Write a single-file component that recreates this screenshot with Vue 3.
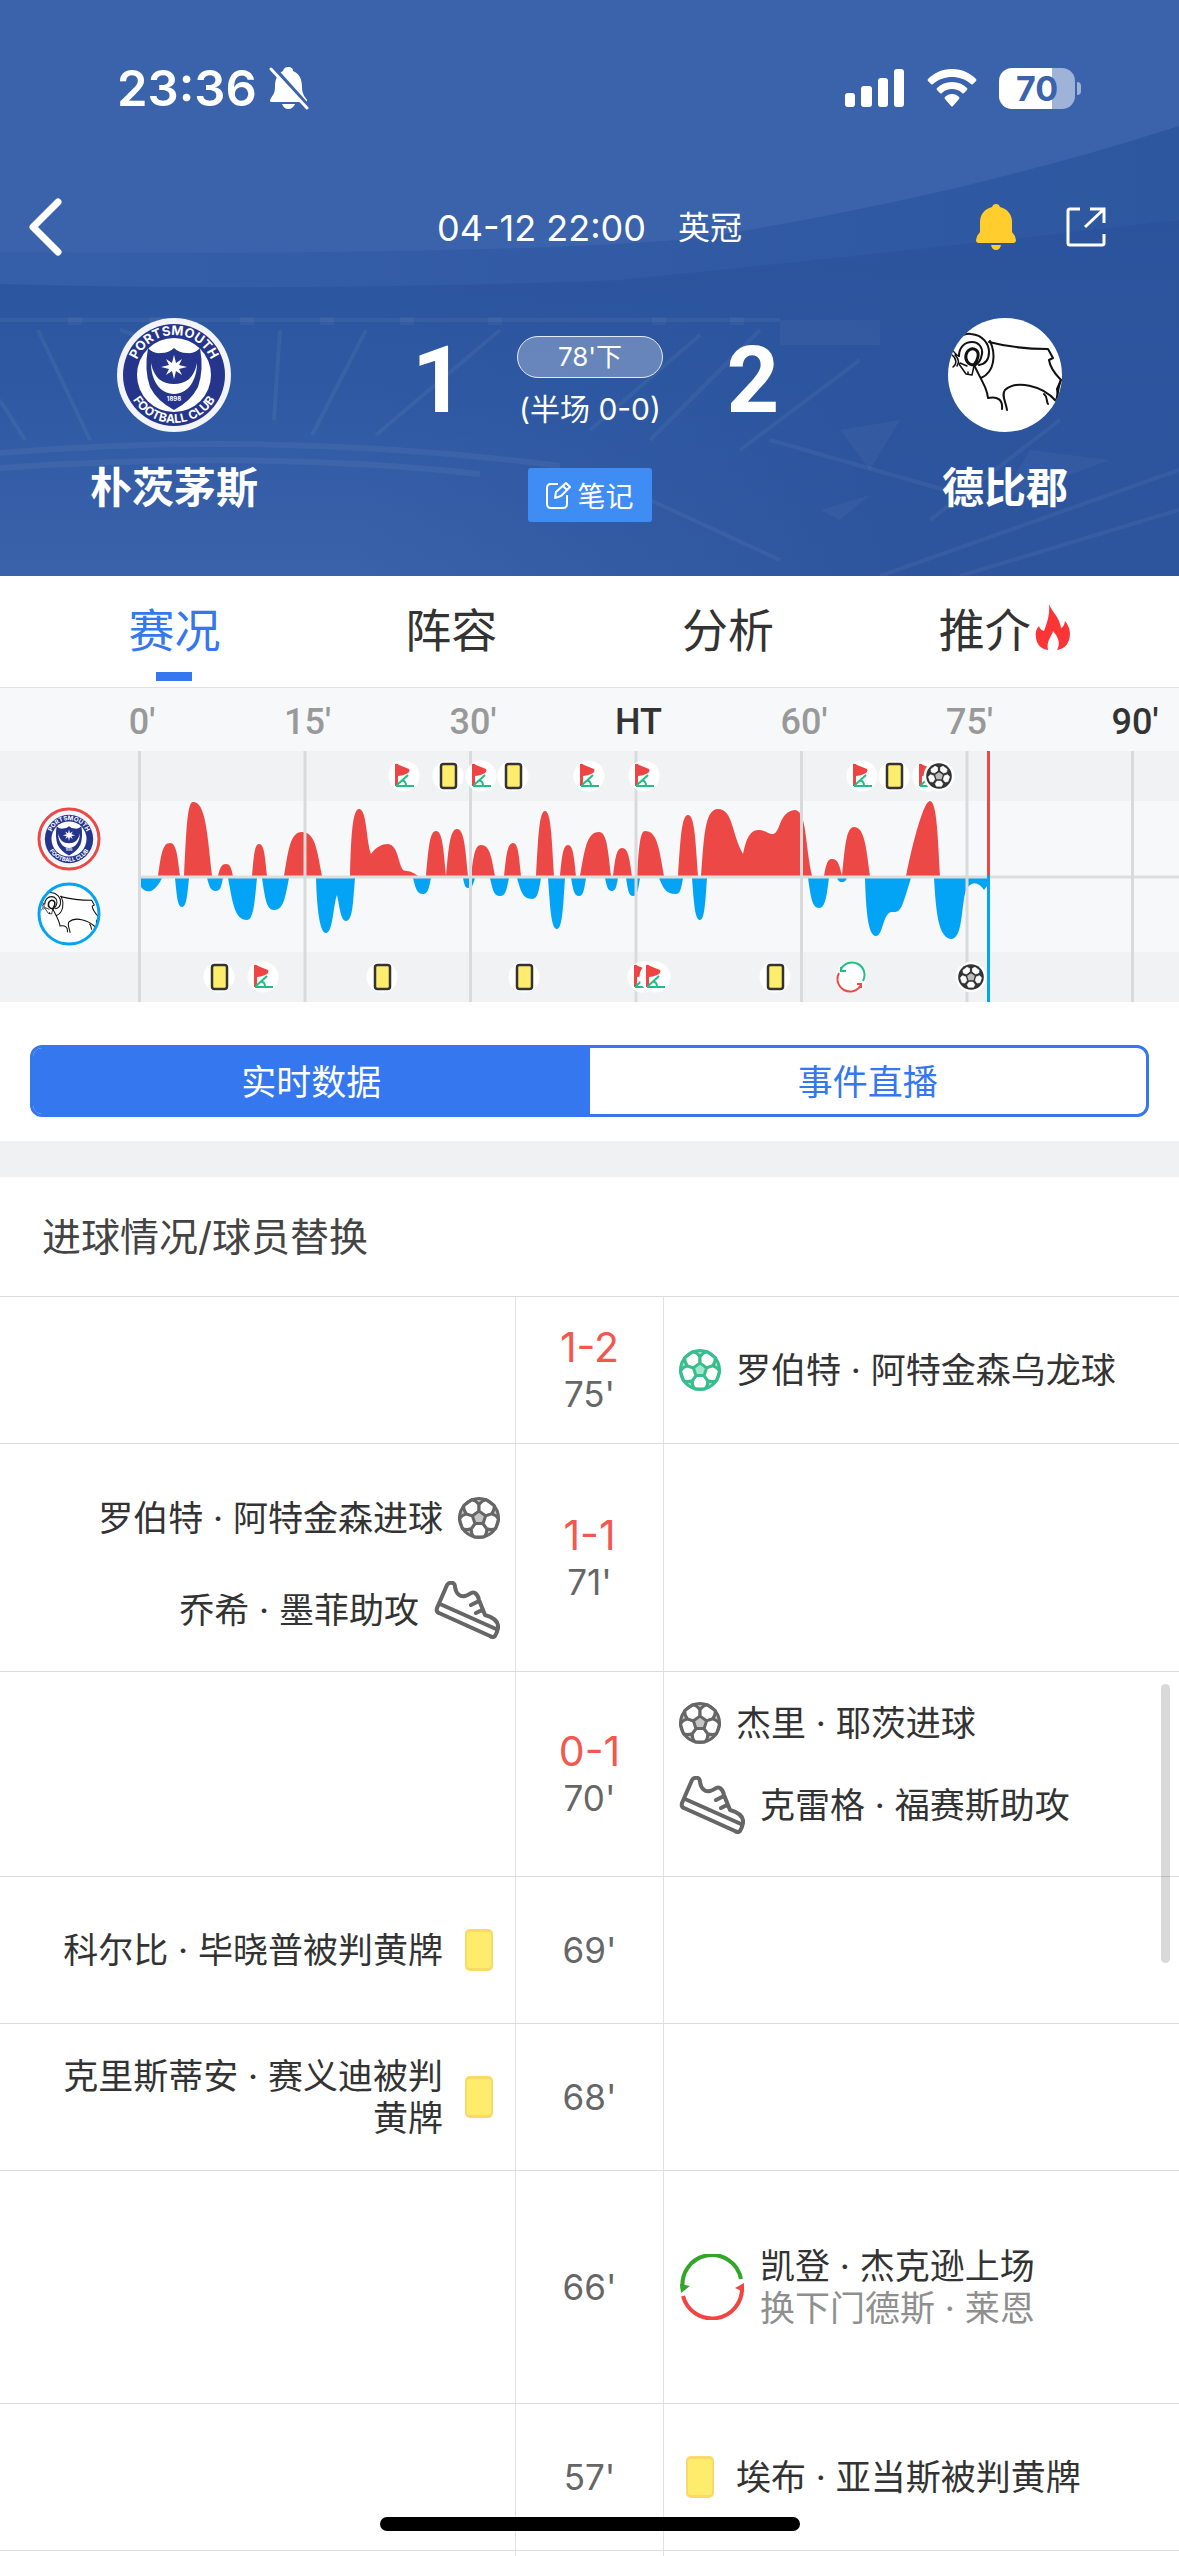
<template>
  <div class="page">
    <!-- 公用图形 -->
    <svg class="defs" aria-hidden="true">
      <defs>
        <path id="arcTop" d="M-40 0A40 40 0 0 1 40 0" />
        <path id="arcBottom" d="M-48 0A48 48 0 0 0 48 0" />
        <clipPath id="ramClip"><circle r="57" /></clipPath>

        <symbol id="logo-home" viewBox="-57 -57 114 114">
          <circle r="57" fill="#f3f4fa" />
          <circle r="51" fill="#24358b" />
          <circle r="37" fill="#fff" />
          <path d="M-26 -27Q-21 -21 -13 -22Q-5 -22 0 -27Q5 -22 13 -22Q21 -21 26 -27Q30 -5 24 12Q17 26 0 35Q-17 26 -24 12Q-30 -5 -26 -27Z" fill="#24358b" />
          <path d="M-23 -12C-23 5 -14 19 0 19C14 19 23 5 23 -12C20 3 12 9 0 9C-12 9 -20 3 -23 -12Z" fill="#fff" />
          <path d="M0 -20L2 -12L8 -16L5 -10L13 -8L5 -6L8 0L2 -4L0 4L-2 -4L-8 0L-5 -6L-13 -8L-5 -10L-8 -16L-2 -12Z" fill="#fff" />
          <text y="26" class="crest-year">1898</text>
          <text class="crest-top"><textPath href="#arcTop" startOffset="50%">PORTSMOUTH</textPath></text>
          <text class="crest-bottom"><textPath href="#arcBottom" startOffset="50%">FOOTBALL CLUB</textPath></text>
        </symbol>

        <symbol id="logo-away" viewBox="-57 -57 114 114">
          <circle r="57" fill="#fff" />
          <g clip-path="url(#ramClip)" fill="none" stroke="#111" stroke-width="2" stroke-linejoin="round" stroke-linecap="round">
            <path d="M-53 -24C-52 -36 -42 -42 -34 -41C-22 -40 -16 -31 -16 -23C-16 -15 -20 -11 -26 -10" />
            <path d="M-46 -19C-46 -28 -40 -33 -33 -33C-26 -33 -22 -27 -23 -21C-24 -15 -27 -11 -31 -9" />
            <path d="M-31 -10C-37 -10 -40 -15 -39 -20C-38 -25 -33 -28 -29 -25C-25 -22 -27 -15 -31 -10Z" stroke-width="3" />
            <path d="M-15 -34C-9 -21 -10 -3 -24 3" />
            <path d="M-53 -25C-49 -22 -49 -19 -46 -19M-53 -20C-48 -16 -48 -11 -52 -8M-50 -20C-46 -16 -46 -12 -48 -9" stroke-width="1.5" />
            <path d="M-46 -11L-39 -1L-33 0L-31 -9M-45 -12L-38 -9M-37 -1V-3" stroke-width="1.5" />
            <path d="M-16 -33C3 -28 22 -26 43 -26L48 -17L44 -15C45 -8 50 -1 56 5C53 12 53 20 51 26C37 10 11 5 0 15C-4 20 1 27 2 35M-3 34C-2 25 -7 21 -17 23C-18 14 -22 8 -31 -10" />
            <path d="M39 19C43 22 41 26 43 29M56 5L52 14L53 22" />
          </g>
        </symbol>

        <symbol id="i-ball" viewBox="-21 -21 42 42">
          <circle r="19.5" class="ball-bg" />
          <g class="ball-line">
            <path v-for="a in [0, 72, 144, 216, 288]" :key="a" :transform="`rotate(${a})`" d="M-4 5.6H4L7.8 10.8Q8 16 5 19H-5Q-8 16 -7.8 10.8Z" />
            <circle r="19.5" fill="none" />
          </g>
        </symbol>

        <symbol id="i-shoe" viewBox="-1 -1 66 58">
          <path
            d="M12 3Q14 0 18 1Q20 2 20 5C21 12 25 15 30 14C35 13 36 9 40 11Q43 13 44 18L50 33C57 35 64 39 63 46Q62 51 60 54Q58 56 55 54L4 31Q1 30 2 26ZM5 22L61 47M44 19L36 23M47 28L41 31"
            fill="none" stroke="#666" stroke-width="4" stroke-linejoin="round" stroke-linecap="round"
          />
        </symbol>

        <symbol id="i-card" viewBox="0 0 42 42">
          <rect x="7" width="28" height="42" rx="5" fill="#fbd968" />
          <rect x="9" y="3" width="24" height="36" rx="3" fill="#feec6c" />
        </symbol>

        <symbol id="i-sub" viewBox="0 0 66 66">
          <path d="M4 36A29 29 0 0 1 62 25" fill="none" stroke="#33a62a" stroke-width="4" />
          <path d="M1 30L11 32L2 39Z" fill="#33a62a" />
          <path d="M4 42A30 30 0 0 0 63 33" fill="none" stroke="#f24440" stroke-width="4" />
          <path d="M65 29L56 34L65 38Z" fill="#f24440" />
        </symbol>

        <!-- 走势图事件标记 -->
        <symbol id="t-card" viewBox="-16 -16 32 32">
          <circle r="15.5" fill="#fff" />
          <rect x="-7" y="-12" width="15" height="24" rx="2.5" fill="#feec6c" stroke="#333" stroke-width="2.5" />
        </symbol>
        <symbol id="t-corner" viewBox="-16 -16 32 32">
          <circle r="15.5" fill="#fff" />
          <path d="M-9 -12Q-7 -13 -5 -11L5 -7Q6 -6 5 -4Q2 -1 -6 0V10H-9Z" fill="#ee4444" />
          <path d="M-7 9L4 -1M-3 5Q2 4 2 10M-8 10H10" fill="none" stroke="#1fbf83" stroke-width="2" />
        </symbol>
        <symbol id="t-sub" viewBox="-16 -16 32 32">
          <circle r="15.5" fill="#fff" />
          <path d="M-10 -8A12.500 12.500 0 0 1 12 4M-10 -10V-6L-5 -6" fill="none" stroke="#1fbf83" stroke-width="2" />
          <path d="M-12 -4A12.500 12.500 0 0 0 10 8M6 7H10V11" fill="none" stroke="#ee4b48" stroke-width="2" />
        </symbol>
        <symbol id="t-ball" viewBox="-25 -25 50 50">
          <circle r="24" fill="#fff" />
          <circle r="20" fill="#333" />
          <path d="M0 -6L6 -2L4 5H-4L-6 -2Z" fill="#bbb" />
          <path v-for="a in [0, 72, 144, 216, 288]" :key="a" :transform="`rotate(${a})`" d="M-3 8H3L6 12L4 16H-4L-6 12Z" fill="#fff" stroke="#fff" stroke-width="1" />
        </symbol>
      </defs>
    </svg>

    <header class="hero">
      <svg class="hero-bg" viewBox="0 0 1179 576" preserveAspectRatio="none" aria-hidden="true">
        <defs>
          <linearGradient id="roof" x1="0" x2="1">
            <stop offset="0" stop-color="#365fa9" />
            <stop offset="1" stop-color="#2d579f" />
          </linearGradient>
          <linearGradient id="stand" x1="0" y1="0" x2="0" y2="1">
            <stop offset="0" stop-color="#2a539c" />
            <stop offset=".5" stop-color="#2f5aa3" />
            <stop offset="1" stop-color="#3a62ab" />
          </linearGradient>
          <linearGradient id="right" x1="0" x2="1">
            <stop offset="0.3" stop-color="#2b549d" stop-opacity="0" />
            <stop offset="0.75" stop-color="#2b549d" stop-opacity=".9" />
          </linearGradient>
        </defs>
        <rect width="1179" height="576" fill="#3a63ac" />
        <path d="M1179 126C1010 180 860 212 700 238Q500 256 0 252V576H1179Z" fill="url(#roof)" />
        <path d="M1179 220C960 245 800 262 620 280Q300 292 0 284V576H1179Z" fill="url(#stand)" />
        <path d="M1179 230C960 250 800 265 620 282Q300 292 0 284V576H1179Z" fill="url(#right)" />
        <g stroke="#fff" fill="none" stroke-opacity=".05" stroke-width="4">
          <path d="M0 320H780M38 330L90 440M120 330L150 340M280 330L274 420M366 330L312 435M500 330L376 435M0 400L25 440" />
          <path d="M0 453Q280 430 560 466M0 468Q260 450 480 474" stroke-width="6" />
          <path d="M700 335L590 430M760 330L650 440M860 360L740 450M1060 420L930 520M1179 470L880 576M1179 510L960 576M650 500L780 560M770 440L980 500" />
        </g>
        <g fill="#fff" fill-opacity=".04">
          <path d="M68 317h14v8h-14zM150 317h14v8h-14zM240 317h14v8h-14zM320 317h14v8h-14zM400 317h14v8h-14zM488 317h14v8h-14zM652 317h14v8h-14zM730 317h14v8h-14z" />
          <path d="M840 430L900 420L870 470ZM1030 450L1110 460L1000 500ZM780 320H880V345H780ZM820 510L870 495L840 520Z" />
        </g>
      </svg>

      <div class="status-bar">
        <div class="status-left">
          <span class="clock">23:36</span>
          <svg width="40" height="44" viewBox="0 0 40 44" aria-hidden="true">
            <path d="M19 1C23 1 24 3 24 5C31 8 33 14 33 21C33 28 36 31 38 34V36H2Q0 35 2 32C5 28 6 26 6 20C6 13 9 7 14 5Q15 1 19 1ZM13 38H26Q24 43 19 43Q15 43 13 38Z" fill="#fff" />
            <path d="M5 2L41 42" stroke="#3a63ac" stroke-width="4" />
            <path d="M2 3L38 42" stroke="#fff" stroke-width="3" stroke-linecap="round" />
          </svg>
        </div>
        <div class="status-right">
          <svg width="60" height="38" viewBox="0 0 60 38" fill="#fff" aria-hidden="true">
            <rect y="24" width="10" height="14" rx="3" /><rect x="16" y="17" width="11" height="21" rx="3" />
            <rect x="33" y="9" width="10" height="29" rx="3" /><rect x="49" width="10" height="38" rx="3" />
          </svg>
          <svg width="50" height="38" viewBox="0 0 50 38" fill="#fff" aria-hidden="true">
            <path d="M25 0C35 0 43 4 49 10Q50 11 49 12L46 15Q45 16 44 15C38 10 32 8 25 8C18 8 12 10 6 15Q5 16 4 15L1 12Q0 11 1 10C7 4 15 0 25 0Z" />
            <path d="M25 13C31 13 36 15 40 19Q41 20 40 21L37 24Q36 25 35 24C32 21 29 20 25 20C21 20 18 21 15 24Q14 25 13 24L10 21Q9 20 10 19C14 15 19 13 25 13Z" />
            <path d="M25 25C28 25 30 26 32 28Q33 29 32 30L26 37Q25 38 24 37L18 30Q17 29 18 28C20 26 22 25 25 25Z" />
          </svg>
          <span class="battery"><span class="battery-num">70</span></span>
        </div>
      </div>

      <nav class="nav-bar">
        <button class="icon-btn back" aria-label="返回">
          <svg width="36" height="60" viewBox="0 0 36 60"><path d="M31 5L6 30L31 55" fill="none" stroke="#fff" stroke-width="7" stroke-linecap="round" stroke-linejoin="round" /></svg>
        </button>
        <div class="nav-title"><span>04-12 22:00</span><span>英冠</span></div>
        <div class="nav-actions">
          <button class="icon-btn" aria-label="提醒">
            <svg width="40" height="46" viewBox="0 0 40 46" fill="#ffcd2d">
              <path d="M20 0Q23 0 24 3C32 5 36 11 36 18V28Q39 31 40 36Q40 39 37 39H3Q0 39 0 36Q1 31 4 28V18C4 11 8 5 16 3Q17 0 20 0ZM15 41H25Q24 46 20 46Q16 46 15 41Z" />
            </svg>
          </button>
          <button class="icon-btn" aria-label="分享">
            <svg width="40" height="40" viewBox="0 0 40 40" fill="none" stroke="#fff" stroke-width="3">
              <path d="M14 2H4Q2 2 2 4V36Q2 38 4 38H36Q38 38 38 36V27M24 2H38V16M38 2L19 20" />
            </svg>
          </button>
        </div>
      </nav>

      <section class="match">
        <div class="team">
          <svg class="team-logo" role="img" aria-label="朴茨茅斯"><use href="#logo-home" /></svg>
          <span class="team-name">朴茨茅斯</span>
        </div>
        <span class="score">1</span>
        <div class="match-mid">
          <span class="phase">78'下</span>
          <span class="half">(半场 0-0)</span>
          <button class="note-btn">
            <svg width="26" height="28" viewBox="0 0 26 28" fill="none" stroke="#fff" stroke-width="2" stroke-linejoin="round">
              <path d="M12 3H5Q1 3 1 7V23Q1 27 5 27H17Q21 27 21 23V14M9 17L10 11L20 2L24 6L15 15ZM17 5L21 9" />
            </svg>
            笔记
          </button>
        </div>
        <span class="score">2</span>
        <div class="team">
          <svg class="team-logo" role="img" aria-label="德比郡"><use href="#logo-away" /></svg>
          <span class="team-name">德比郡</span>
        </div>
      </section>
    </header>

    <nav class="tabs">
      <button v-for="tab in tabs" :key="tab" class="tab" :class="{ active: tab === activeTab }" @click="activeTab = tab">
        {{ tab }}
        <svg v-if="tab === '推介'" width="36" height="46" viewBox="0 0 36 46" aria-hidden="true">
          <path d="M14 0C17 8 25 14 26 24Q29 23 30 17C35 23 36 30 34 36C32 42 28 45 22 46C26 39 23 33 18 27C17 32 11 37 13 46C6 45 2 41 1 34C0 29 1 25 4 22Q5 26 9 27C12 19 15 11 14 0Z" fill="#fb3535" />
        </svg>
      </button>
    </nav>

    <!-- 攻势走势图 -->
    <svg class="trend" viewBox="0 0 1179 314" role="img" aria-label="攻势走势">
      <rect width="1179" height="314" fill="#f7f8fa" />
      <text v-for="(m, i) in marks" :key="m" :x="142 + i * 165.5" y="46" class="mark" :class="{ dark: m === 'HT' || m === '90\'' }">{{ m }}</text>
      <g transform="translate(0 63)">
        <rect width="1179" height="50" fill="#f1f2f3" />
        <rect y="201" width="1179" height="50" fill="#f1f2f3" />
        <path :d="homeTrend" fill="#ec4845" />
        <path :d="awayTrend" fill="#03a4f5" />
        <path d="M141 126H1179" stroke="#dcdddd" stroke-width="3" />
        <path v-for="(m, i) in marks" :key="m" :d="`M${139.5 + i * 165.5} 0V251`" stroke="#d9dada" stroke-width="3" />
        <path d="M988.500 0V125" stroke="#ec4845" stroke-width="3" />
        <path d="M988.500 125V251" stroke="#03a4f5" stroke-width="3" />
        <use v-for="(e, i) in homeMarks" :key="'h' + i" :href="'#t-' + e[0]" :x="e[1] - 16" y="9" width="32" height="32" />
        <use v-for="(e, i) in awayMarks" :key="'a' + i" :href="'#t-' + e[0]" :x="e[1] - 16" y="210" width="32" height="32" />
        <circle cx="69" cy="88" r="30" fill="#fff" stroke="#ec4845" stroke-width="3" />
        <use href="#logo-home" x="42" y="61" width="54" height="54" />
        <use href="#logo-away" x="39" y="133" width="60" height="60" />
        <circle cx="69" cy="163" r="30" fill="none" stroke="#03a4f5" stroke-width="3" />
      </g>
    </svg>

    <div class="switch">
      <button v-for="mode in modes" :key="mode" class="switch-btn" :class="{ active: mode === activeMode }" @click="activeMode = mode">{{ mode }}</button>
    </div>

    <section class="events">
      <h2 class="events-title">进球情况/球员替换</h2>
      <ul class="event-list">
        <li v-for="row in rows" :key="row.time" class="event-row" :class="row.size">
          <div v-for="side in ['home', 'away']" :key="side" class="cell" :class="side">
            <div v-for="item in row[side] || []" :key="item.text" class="item">
              <svg class="item-icon" :class="item.icon" aria-hidden="true"><use :href="'#i-' + item.icon.split(' ')[0]" /></svg>
              <p class="item-text">{{ item.text }}<span v-if="item.off" class="off">{{ item.off }}</span></p>
            </div>
          </div>
          <div class="cell center">
            <span v-if="row.score" class="row-score">{{ row.score }}</span>
            <span class="row-time">{{ row.time }}</span>
          </div>
        </li>
        <li class="event-row rest"><div class="cell home"></div><div class="cell center"></div><div class="cell away"></div></li>
      </ul>
    </section>

    <div class="scroll-thumb"></div>
    <div class="home-indicator"></div>
  </div>
</template>

<script setup>
import { ref } from 'vue'

const tabs = ['赛况', '阵容', '分析', '推介']
const activeTab = ref('赛况')

const modes = ['实时数据', '事件直播']
const activeMode = ref('实时数据')

const marks = ["0'", "15'", "30'", 'HT', "60'", "75'", "90'"]

// 单个波峰: [起点, 峰值x, 终点, 峰值y]
const bump = (base) => ([x0, px, x1, py]) => {
  const l = px - x0
  const r = x1 - px
  const my = base + (py - base) * 0.6
  return `M${x0} ${base}C${x0 + l * 0.25} ${my} ${px - l * 0.65} ${py} ${px} ${py}C${px + r * 0.65} ${py} ${x1 - r * 0.25} ${my} ${x1} ${base}Z`
}

const homeTrend = [
  [158, 170, 180, 92], [184, 193, 212, 51], [218, 226, 233, 113], [252, 259, 267, 93],
  [284, 302, 322, 81], [426, 436, 446, 80], [446, 457, 468, 78], [471, 481, 495, 94],
  [504, 513, 521, 92], [536, 545, 554, 60], [560, 568, 576, 94], [580, 599, 611, 81],
  [613, 622, 632, 97], [637, 645, 664, 80], [678, 688, 698, 64], [824, 832, 842, 108],
  [842, 854, 870, 76]
].map(bump(125)).join('')
  + 'M350 125C351 90 352 58 359 58C367 58 366 90 371 103C376 96 382 93 388 93C398 94 398 112 403 119C406 121 409 118 418 125Z'
  + 'M701 125C704 90 704 58 718 58C733 58 732 84 743 103C746 88 750 79 758 79C766 79 768 83 773 83C781 82 778 61 795 59C807 60 805 95 812 125Z'
  + 'M906 125C914 86 924 50 930 50C937 50 938 90 940 125Z'

const awayTrend = [
  [175, 182, 189, 156], [207, 216, 223, 140], [228, 247, 257, 169], [262, 274, 289, 159],
  [413, 423, 431, 143], [463, 468, 475, 137], [490, 500, 509, 145], [517, 532, 541, 148],
  [548, 557, 565, 178], [571, 579, 586, 145], [605, 612, 618, 140], [626, 633, 640, 145],
  [659, 676, 683, 143], [692, 700, 707, 169], [808, 819, 829, 157], [837, 842, 847, 131]
].map(bump(127)).join('')
  + 'M141 127V136C145 142 154 144 162 127Z'
  + 'M316 127C317 160 320 182 326 182C333 182 333 155 337 144C340 158 341 170 346 170C353 170 353 150 355 127Z'
  + 'M865 127C866 160 868 185 876 185C883 185 883 161 892 161C902 162 902 155 911 127Z'
  + 'M934 127C936 160 938 188 952 188C963 186 961 155 966 139C971 130 978 130 984 139L987 135V127Z'

const homeMarks = [
  ['corner', 404], ['card', 448], ['corner', 481], ['card', 513], ['corner', 589],
  ['corner', 644], ['corner', 862], ['card', 894], ['corner', 928], ['ball', 939]
]
const awayMarks = [
  ['card', 219], ['corner', 263], ['card', 382], ['card', 524], ['corner', 643],
  ['corner', 655], ['card', 775], ['sub', 851], ['ball', 971]
]

const rows = [
  { time: "75'", score: '1-2', away: [{ icon: 'ball own', text: '罗伯特 · 阿特金森乌龙球' }] },
  {
    time: "71'", score: '1-1', size: 'tall',
    home: [{ icon: 'ball', text: '罗伯特 · 阿特金森进球' }, { icon: 'shoe', text: '乔希 · 墨菲助攻' }]
  },
  {
    time: "70'", score: '0-1', size: 'medium',
    away: [{ icon: 'ball', text: '杰里 · 耶茨进球' }, { icon: 'shoe', text: '克雷格 · 福赛斯助攻' }]
  },
  { time: "69'", home: [{ icon: 'card', text: '科尔比 · 毕晓普被判黄牌' }] },
  { time: "68'", home: [{ icon: 'card', text: '克里斯蒂安 · 赛义迪被判黄牌' }] },
  { time: "66'", size: 'large', away: [{ icon: 'sub', text: '凯登 · 杰克逊上场', off: '换下门德斯 · 莱恩' }] },
  { time: "57'", away: [{ icon: 'card', text: '埃布 · 亚当斯被判黄牌' }] }
]
</script>

<style>
body {
  margin: 0;
  background: #fff;
}
</style>

<style scoped>
.page {
  position: relative;
  display: flex;
  flex-direction: column;
  min-height: 100vh;
  font-family: Inter, "Noto Sans CJK SC", sans-serif;
  color: #333;
  background: #fff;
}

button {
  font-family: inherit;
  padding: 0;
  border: none;
  background: none;
  cursor: pointer;
}

.defs {
  position: absolute;
  width: 0;
  height: 0;
}

.crest-top,
.crest-bottom,
.crest-year {
  fill: #fff;
  font-family: Inter, sans-serif;
  font-weight: 700;
  text-anchor: middle;
}

.crest-top { font-size: 13px; }
.crest-bottom { font-size: 12px; }
.crest-year { font-size: 6px; }

/* 头部 */
.hero {
  position: relative;
  color: #fff;
  padding-bottom: 54px;
}

.hero-bg {
  position: absolute;
  inset: 0;
  width: 100%;
  height: 100%;
}

.status-bar {
  position: relative;
  display: flex;
  justify-content: space-between;
  align-items: center;
  height: 56px;
  padding: 60px 104px 0 117px;
}

.status-left,
.status-right {
  display: flex;
  align-items: center;
}

.status-left { gap: 12px; }
.status-right { gap: 22px; }

.clock {
  font-size: 49px;
  font-weight: 600;
}

.battery {
  position: relative;
  display: flex;
  align-items: center;
  justify-content: center;
  width: 76px;
  height: 41px;
  border-radius: 13px;
  background: linear-gradient(90deg, #fff 70%, #9fb2d7 70%);
}

.battery::after {
  content: "";
  position: absolute;
  right: -6px;
  width: 4px;
  height: 13px;
  border-radius: 0 4px 4px 0;
  background: #9fb2d7;
}

.battery-num {
  font-size: 34px;
  font-weight: 700;
  color: #3a63ac;
}

.nav-bar {
  position: relative;
  display: grid;
  grid-template-columns: 1fr auto 1fr;
  align-items: center;
  height: 100px;
  margin-top: 61px;
  padding: 0 73px 0 27px;
}

.icon-btn {
  display: flex;
}

.nav-title {
  display: flex;
  gap: 32px;
  margin-left: 46px;
  padding-top: 2px;
  font-size: 36px;
  line-height: 48px;
}

.nav-title span:last-child {
  font-size: 32px;
}

.nav-actions {
  display: flex;
  justify-content: flex-end;
  align-items: center;
  gap: 50px;
}

.match {
  position: relative;
  display: grid;
  grid-template-columns: 348fr 169fr 146fr 168fr 348fr;
  padding-top: 41px;
}

.team {
  display: flex;
  flex-direction: column;
  align-items: center;
}

.team-logo {
  width: 114px;
  height: 114px;
}

.team-name {
  margin-top: 28px;
  font-size: 42px;
  font-weight: 700;
  line-height: 56px;
}

.score {
  padding-left: 12px;
  font-family: Roboto, sans-serif;
  font-size: 92px;
  font-weight: 700;
  line-height: 126px;
  text-align: center;
}

.match-mid {
  display: flex;
  flex-direction: column;
  align-items: center;
  padding-top: 18px;
}

.phase {
  box-sizing: border-box;
  width: 100%;
  height: 42px;
  border: 1px solid #e4e9f4;
  border-radius: 21px;
  background: rgba(255, 255, 255, 0.28);
  font-size: 26px;
  line-height: 40px;
  text-align: center;
}

.half {
  margin-top: 10px;
  font-size: 30px;
  line-height: 42px;
  white-space: nowrap;
}

.note-btn {
  display: flex;
  align-items: center;
  justify-content: center;
  gap: 5px;
  width: 124px;
  height: 54px;
  margin-top: 38px;
  border-radius: 3px;
  background: #3f8cf5;
  color: #fff;
  font-size: 28px;
}

/* 标签 */
.tabs {
  display: flex;
  padding: 0 36px;
  height: 111px;
  border-bottom: 1px solid #dfe1e3;
}

.tab {
  position: relative;
  flex: 1;
  display: flex;
  align-items: center;
  justify-content: center;
  gap: 4px;
  padding-bottom: 10px;
  font-size: 46px;
  color: #333;
}

.tab.active {
  color: #3577ee;
}

.tab.active::after {
  content: "";
  position: absolute;
  bottom: 6px;
  width: 36px;
  height: 9px;
  background: #3577ee;
}

.trend {
  display: block;
  width: 100%;
}

.mark {
  font-family: Roboto, sans-serif;
  font-size: 36px;
  font-weight: 500;
  text-anchor: middle;
  fill: #999;
}

.mark.dark {
  fill: #333;
}

.switch {
  display: flex;
  height: 66px;
  margin: 43px 30px 24px;
  border: 3px solid #3577ee;
  border-radius: 12px;
  overflow: hidden;
}

.switch-btn {
  flex: 1;
  padding-bottom: 3px;
  font-size: 35px;
  color: #3577ee;
}

.switch-btn.active {
  background: #3577ee;
  color: #fff;
}

/* 事件列表 */
.events {
  flex: 1;
  display: flex;
  flex-direction: column;
  border-top: 36px solid #f0f1f3;
}

.events-title {
  margin: 0;
  padding: 0 42px;
  font-size: 39px;
  font-weight: 400;
  line-height: 119px;
  color: #444;
  border-bottom: 1px solid #dcdcdc;
}

.event-list {
  flex: 1;
  display: flex;
  flex-direction: column;
  margin: 0;
  padding: 0;
  list-style: none;
}

.event-row {
  display: grid;
  grid-template-columns: 1fr 149px 1fr;
  min-height: 146px;
  border-bottom: 1px solid #dcdcdc;
}

.event-row.tall { min-height: 227px; }
.event-row.medium { min-height: 204px; }
.event-row.large { min-height: 232px; }

.event-row.rest {
  flex: 1;
  min-height: 5px;
  border-bottom: none;
}

.cell {
  grid-row: 1;
  display: flex;
  flex-direction: column;
  justify-content: center;
}

.home {
  grid-column: 1;
  padding: 0 15px 0 40px;
}

.center {
  grid-column: 2;
  align-items: center;
  border: solid #e2e2e2;
  border-width: 0 1px;
}

.away {
  grid-column: 3;
  padding: 0 40px 0 15px;
}

.item {
  display: flex;
  align-items: center;
  gap: 15px;
}

.home .item {
  flex-direction: row-reverse;
  text-align: right;
}

.tall .item { height: 92px; }
.tall .home { padding-top: 12px; }
.medium .item { height: 82px; }
.medium .away { padding-bottom: 20px; }

.item-text {
  margin: 0;
  font-size: 35px;
  line-height: 42px;
}

.off {
  display: block;
  color: #8f8f8f;
}

.item-icon {
  flex: none;
  width: 42px;
  height: 42px;
}

.item-icon.shoe {
  width: 66px;
  height: 58px;
}

.item-icon.sub {
  width: 66px;
  height: 66px;
}

.ball {
  --line: #666;
  --patch: #c6c6c6;
}

.ball.own {
  --line: #37bd8e;
  --patch: #a5e6cf;
}

.ball-bg {
  fill: var(--patch);
}

.ball-line {
  fill: #fff;
  stroke: var(--line);
  stroke-width: 3;
  stroke-linejoin: round;
}

.row-score {
  font-size: 41px;
  line-height: 48px;
  color: #f35850;
}

.row-time {
  font-size: 35px;
  line-height: 46px;
  color: #666;
}

.scroll-thumb {
  position: absolute;
  top: 1684px;
  right: 9px;
  width: 9px;
  height: 279px;
  border-radius: 5px;
  background: rgba(0, 0, 0, 0.15);
}

.home-indicator {
  position: fixed;
  bottom: 25px;
  left: 50%;
  width: 420px;
  height: 14px;
  margin-left: -210px;
  border-radius: 7px;
  background: #000;
}
</style>
